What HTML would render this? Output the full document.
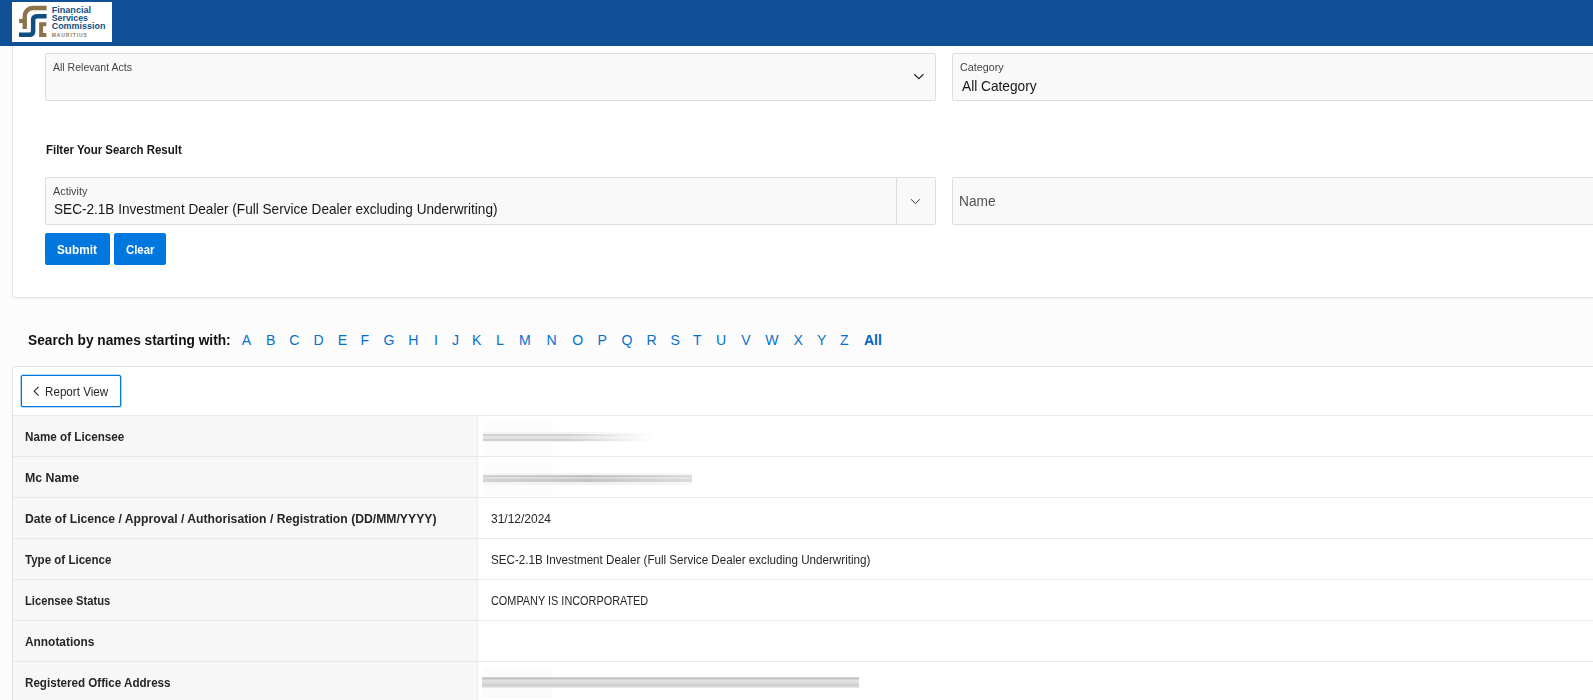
<!DOCTYPE html>
<html><head><meta charset="utf-8">
<style>
*{box-sizing:border-box;margin:0;padding:0}
html,body{width:1593px;height:700px;overflow:hidden;background:#fcfcfc;font-family:"Liberation Sans",sans-serif;color:#262626}
.a{position:absolute}
.t{position:absolute;white-space:nowrap}
.fld{position:absolute;background:#f9f9f9;border:1px solid #dedede;border-radius:2px}
.btn{position:absolute;background:#0076df;border-radius:2px}
.row{position:absolute;left:13px;width:1590px;height:41px;border-top:1px solid #e9e9e9;background:#fff}
.th{position:absolute;left:0;top:0;width:465px;height:40px;background:#f7f7f7;border-right:1px solid #ededed}
</style></head><body>
<div class="a" style="left:0;top:0;width:1593px;height:46px;background:#0f5096;z-index:2"></div>
<svg class="a" style="left:12px;top:2px;z-index:3" width="100" height="40" viewBox="0 0 100 40">
<rect x="0" y="0" width="100" height="40" fill="#fff"/>
<path d="M34.6 3.7 H20.6 A10 10 0 0 0 10.6 13.7 V26.9 H14.9 V14.3 A6 6 0 0 1 20.9 8.3 H34.6 Z" fill="#8c7349"/>
<rect x="7.1" y="16.9" width="6" height="4.2" fill="#8c7349"/>
<path d="M34.6 12 H24.4 A5.5 5.5 0 0 0 18.9 17.5 V29.1 A1.5 1.5 0 0 1 17.4 30.6 H7 V35.1 H17.9 A5.5 5.5 0 0 0 23.4 29.6 V18.1 A1.5 1.5 0 0 1 24.9 16.6 H34.6 Z" fill="#0f4e7f"/>
<path d="M27.1 20.3 H34.3 V24.3 H31.1 V30.9 H34.3 V35.1 H27.1 Z" fill="#8c7349"/>
<g font-family="Liberation Sans" font-weight="bold" fill="#0f4e7f" font-size="9">
<text x="39.7" y="10.6" textLength="39.4" lengthAdjust="spacingAndGlyphs">Financial</text>
<text x="39.7" y="18.9" textLength="36.3" lengthAdjust="spacingAndGlyphs">Services</text>
<text x="39.7" y="27.4" textLength="53.7" lengthAdjust="spacingAndGlyphs">Commission</text>
</g>
<text x="39.7" y="35.1" font-family="Liberation Sans" font-weight="bold" fill="#8f7a58" font-size="5" textLength="35.2" lengthAdjust="spacing">MAURITIUS</text>
</svg>
<div class="a" style="left:12px;top:40px;width:1590px;height:258px;background:#fff;border:1px solid #e4e4e4;border-radius:3px;box-shadow:0 1px 2px rgba(0,0,0,.04)"></div>
<div class="fld" style="left:45px;top:53px;width:891px;height:48px"></div>
<svg class="a" style="left:910px;top:70px" width="18" height="14"><path d="M4.25 4.25 L8.9 8.6 L13.4 4.25" fill="none" stroke="#262626" stroke-width="1.3"/></svg>
<div class="fld" style="left:952px;top:53px;width:700px;height:48px"></div>
<div class="fld" style="left:45px;top:177px;width:891px;height:48px"></div>
<div class="a" style="left:896px;top:178px;width:1px;height:46px;background:#dedede"></div>
<svg class="a" style="left:905px;top:194px" width="20" height="14"><path d="M6 5.25 L10.4 9.6 L14.75 5.25" fill="none" stroke="#2a2a2a" stroke-width="0.95"/></svg>
<div class="fld" style="left:952px;top:177px;width:700px;height:48px"></div>
<div class="btn" style="left:45px;top:233px;width:65px;height:32px"></div>
<div class="btn" style="left:114px;top:233px;width:52px;height:32px"></div>
<div class="a" style="left:12px;top:366px;width:1590px;height:340px;background:#fff;border:1px solid #e4e4e4;border-radius:3px"></div>
<div class="a" style="left:21px;top:375px;width:100px;height:32px;border:1px solid #0076df;border-radius:2px;box-shadow:0 0 0 0.6px rgba(0,118,223,0.55);background:#fff"></div>
<svg class="a" style="left:30px;top:383px" width="12" height="16"><path d="M8.5 3.8 L4.2 8.2 L8.5 12.6" fill="none" stroke="#262626" stroke-width="1.1"/></svg>
<div class="row" style="top:415px"><div class="th"></div></div>
<div class="row" style="top:456px"><div class="th"></div></div>
<div class="row" style="top:497px"><div class="th"></div></div>
<div class="row" style="top:538px"><div class="th"></div></div>
<div class="row" style="top:579px"><div class="th"></div></div>
<div class="row" style="top:620px"><div class="th"></div></div>
<div class="row" style="top:661px"><div class="th"></div></div>
<div class="a" style="left:483px;top:422px;width:70px;height:33px;background:#fcfcfc"></div>
<div class="a" style="left:483px;top:432px;width:170px;height:10px;background:linear-gradient(180deg,#f3f3f3 0,#f3f3f3 2px,#d2d2d2 2px,#d2d2d2 4px,#e2e2e2 4px,#e2e2e2 7px,#d0d0d0 7px,#d0d0d0 9px,#f5f5f5 9px);-webkit-mask-image:linear-gradient(90deg,#000 0%,#000 50%,rgba(0,0,0,.5) 75%,transparent 100%)"></div>
<div class="a" style="left:483px;top:463px;width:70px;height:33px;background:#fcfcfc"></div>
<div class="a" style="left:483px;top:473px;width:209px;height:12px;background:linear-gradient(180deg,#f4f4f4 0,#f4f4f4 2px,#c8c8c8 2px,#bdbdbd 4px,#d6d6d6 4px,#d6d6d6 6px,#c4c4c4 6px,#c4c4c4 9px,#f2f2f2 9px);-webkit-mask-image:linear-gradient(90deg,rgba(0,0,0,.75) 0%,#000 50%,rgba(0,0,0,.6) 100%)"></div>
<div class="a" style="left:482px;top:668px;width:70px;height:30px;background:#fbfbfb"></div>
<div class="a" style="left:482px;top:677px;width:377px;height:11px;background:linear-gradient(180deg,#ececec 0,#b9b9b9 1px,#c6c6c6 2px,#e3e3e3 3px,#dcdcdc 6px,#cfcfcf 8px,#c9c9c9 9px,#e8e8e8 10px)"></div>
<div class="t" style="left:53.20px;top:61.69px;font-size:11.0px;line-height:11.0px;color:#454545;font-weight:normal;letter-spacing:0.000px;transform:scaleX(0.9564);transform-origin:0 0;">All Relevant Acts</div>
<div class="t" style="left:959.60px;top:61.89px;font-size:11.0px;line-height:11.0px;color:#454545;font-weight:normal;letter-spacing:0.000px;transform:scaleX(0.9771);transform-origin:0 0;">Category</div>
<div class="t" style="left:961.60px;top:78.76px;font-size:14.1px;line-height:14.1px;color:#161616;font-weight:normal;letter-spacing:0.000px;transform:scaleX(0.9715);transform-origin:0 0;">All Category</div>
<div class="t" style="left:45.50px;top:143.64px;font-size:12.0px;line-height:12.0px;color:#161616;font-weight:bold;letter-spacing:0.000px;transform:scaleX(0.9538);transform-origin:0 0;">Filter Your Search Result</div>
<div class="t" style="left:53.40px;top:186.39px;font-size:11.0px;line-height:11.0px;color:#454545;font-weight:normal;letter-spacing:0.000px;transform:scaleX(0.9876);transform-origin:0 0;">Activity</div>
<div class="t" style="left:54.30px;top:202.36px;font-size:14.1px;line-height:14.1px;color:#161616;font-weight:normal;letter-spacing:0.000px;transform:scaleX(0.9645);transform-origin:0 0;">SEC-2.1B Investment Dealer (Full Service Dealer excluding Underwriting)</div>
<div class="t" style="left:959.43px;top:193.86px;font-size:14.1px;line-height:14.1px;color:#505050;font-weight:normal;letter-spacing:0.000px;transform:scaleX(0.9740);transform-origin:0 0;">Name</div>
<div class="t" style="left:57.10px;top:243.20px;font-size:13.0px;line-height:13.0px;color:#ffffff;font-weight:bold;letter-spacing:0.000px;transform:scaleX(0.9056);transform-origin:0 0;">Submit</div>
<div class="t" style="left:125.80px;top:243.20px;font-size:13.0px;line-height:13.0px;color:#ffffff;font-weight:bold;letter-spacing:0.000px;transform:scaleX(0.8749);transform-origin:0 0;">Clear</div>
<div class="t" style="left:27.80px;top:332.86px;font-size:14.1px;line-height:14.1px;color:#111111;font-weight:bold;letter-spacing:0.000px;transform:scaleX(0.9729);transform-origin:0 0;">Search by names starting with:</div>
<div class="t" style="left:44.77px;top:385.72px;font-size:12.5px;line-height:12.5px;color:#262626;font-weight:normal;letter-spacing:0.000px;transform:scaleX(0.9317);transform-origin:0 0;">Report View</div>
<div class="t" style="left:24.90px;top:431.42px;font-size:12.5px;line-height:12.5px;color:#262626;font-weight:bold;letter-spacing:0.000px;transform:scaleX(0.9338);transform-origin:0 0;">Name of Licensee</div>
<div class="t" style="left:24.90px;top:472.42px;font-size:12.5px;line-height:12.5px;color:#262626;font-weight:bold;letter-spacing:0.000px;transform:scaleX(0.9849);transform-origin:0 0;">Mc Name</div>
<div class="t" style="left:24.90px;top:513.42px;font-size:12.5px;line-height:12.5px;color:#262626;font-weight:bold;letter-spacing:0.000px;transform:scaleX(0.9749);transform-origin:0 0;">Date of Licence / Approval / Authorisation / Registration (DD/MM/YYYY)</div>
<div class="t" style="left:24.90px;top:554.42px;font-size:12.5px;line-height:12.5px;color:#262626;font-weight:bold;letter-spacing:0.000px;transform:scaleX(0.9242);transform-origin:0 0;">Type of Licence</div>
<div class="t" style="left:24.90px;top:595.42px;font-size:12.5px;line-height:12.5px;color:#262626;font-weight:bold;letter-spacing:0.000px;transform:scaleX(0.8968);transform-origin:0 0;">Licensee Status</div>
<div class="t" style="left:24.90px;top:636.42px;font-size:12.5px;line-height:12.5px;color:#262626;font-weight:bold;letter-spacing:0.000px;transform:scaleX(0.9513);transform-origin:0 0;">Annotations</div>
<div class="t" style="left:24.90px;top:677.42px;font-size:12.5px;line-height:12.5px;color:#262626;font-weight:bold;letter-spacing:0.000px;transform:scaleX(0.9297);transform-origin:0 0;">Registered Office Address</div>
<div class="t" style="left:490.60px;top:513.42px;font-size:12.5px;line-height:12.5px;color:#262626;font-weight:normal;letter-spacing:0.000px;transform:scaleX(0.9583);transform-origin:0 0;">31/12/2024</div>
<div class="t" style="left:490.60px;top:554.42px;font-size:12.5px;line-height:12.5px;color:#262626;font-weight:normal;letter-spacing:0.000px;transform:scaleX(0.9302);transform-origin:0 0;">SEC-2.1B Investment Dealer (Full Service Dealer excluding Underwriting)</div>
<div class="t" style="left:490.60px;top:595.42px;font-size:12.5px;line-height:12.5px;color:#262626;font-weight:normal;letter-spacing:0.000px;transform:scaleX(0.8707);transform-origin:0 0;">COMPANY IS INCORPORATED</div>
<div class="t" style="left:241.80px;top:333.26px;font-size:14.1px;line-height:14.1px;color:#0572ce;font-weight:normal;letter-spacing:0.000px;">A</div>
<div class="t" style="left:265.90px;top:333.26px;font-size:14.1px;line-height:14.1px;color:#0572ce;font-weight:normal;letter-spacing:0.000px;">B</div>
<div class="t" style="left:289.30px;top:333.26px;font-size:14.1px;line-height:14.1px;color:#0572ce;font-weight:normal;letter-spacing:0.000px;">C</div>
<div class="t" style="left:313.50px;top:333.26px;font-size:14.1px;line-height:14.1px;color:#0572ce;font-weight:normal;letter-spacing:0.000px;">D</div>
<div class="t" style="left:337.70px;top:333.26px;font-size:14.1px;line-height:14.1px;color:#0572ce;font-weight:normal;letter-spacing:0.000px;">E</div>
<div class="t" style="left:360.40px;top:333.26px;font-size:14.1px;line-height:14.1px;color:#0572ce;font-weight:normal;letter-spacing:0.000px;">F</div>
<div class="t" style="left:383.50px;top:333.26px;font-size:14.1px;line-height:14.1px;color:#0572ce;font-weight:normal;letter-spacing:0.000px;">G</div>
<div class="t" style="left:408.30px;top:333.26px;font-size:14.1px;line-height:14.1px;color:#0572ce;font-weight:normal;letter-spacing:0.000px;">H</div>
<div class="t" style="left:434.00px;top:333.26px;font-size:14.1px;line-height:14.1px;color:#0572ce;font-weight:normal;letter-spacing:0.000px;">I</div>
<div class="t" style="left:452.00px;top:333.26px;font-size:14.1px;line-height:14.1px;color:#0572ce;font-weight:normal;letter-spacing:0.000px;">J</div>
<div class="t" style="left:472.10px;top:333.26px;font-size:14.1px;line-height:14.1px;color:#0572ce;font-weight:normal;letter-spacing:0.000px;">K</div>
<div class="t" style="left:496.10px;top:333.26px;font-size:14.1px;line-height:14.1px;color:#0572ce;font-weight:normal;letter-spacing:0.000px;">L</div>
<div class="t" style="left:518.90px;top:333.26px;font-size:14.1px;line-height:14.1px;color:#0572ce;font-weight:normal;letter-spacing:0.000px;">M</div>
<div class="t" style="left:546.50px;top:333.26px;font-size:14.1px;line-height:14.1px;color:#0572ce;font-weight:normal;letter-spacing:0.000px;">N</div>
<div class="t" style="left:572.20px;top:333.26px;font-size:14.1px;line-height:14.1px;color:#0572ce;font-weight:normal;letter-spacing:0.000px;">O</div>
<div class="t" style="left:597.50px;top:333.26px;font-size:14.1px;line-height:14.1px;color:#0572ce;font-weight:normal;letter-spacing:0.000px;">P</div>
<div class="t" style="left:621.40px;top:333.26px;font-size:14.1px;line-height:14.1px;color:#0572ce;font-weight:normal;letter-spacing:0.000px;">Q</div>
<div class="t" style="left:646.40px;top:333.26px;font-size:14.1px;line-height:14.1px;color:#0572ce;font-weight:normal;letter-spacing:0.000px;">R</div>
<div class="t" style="left:670.50px;top:333.26px;font-size:14.1px;line-height:14.1px;color:#0572ce;font-weight:normal;letter-spacing:0.000px;">S</div>
<div class="t" style="left:693.00px;top:333.26px;font-size:14.1px;line-height:14.1px;color:#0572ce;font-weight:normal;letter-spacing:0.000px;">T</div>
<div class="t" style="left:715.90px;top:333.26px;font-size:14.1px;line-height:14.1px;color:#0572ce;font-weight:normal;letter-spacing:0.000px;">U</div>
<div class="t" style="left:741.30px;top:333.26px;font-size:14.1px;line-height:14.1px;color:#0572ce;font-weight:normal;letter-spacing:0.000px;">V</div>
<div class="t" style="left:765.30px;top:333.26px;font-size:14.1px;line-height:14.1px;color:#0572ce;font-weight:normal;letter-spacing:0.000px;">W</div>
<div class="t" style="left:793.50px;top:333.26px;font-size:14.1px;line-height:14.1px;color:#0572ce;font-weight:normal;letter-spacing:0.000px;">X</div>
<div class="t" style="left:817.00px;top:333.26px;font-size:14.1px;line-height:14.1px;color:#0572ce;font-weight:normal;letter-spacing:0.000px;">Y</div>
<div class="t" style="left:840.10px;top:333.26px;font-size:14.1px;line-height:14.1px;color:#0572ce;font-weight:normal;letter-spacing:0.000px;">Z</div>
<div class="t" style="left:863.95px;top:333.26px;font-size:14.1px;line-height:14.1px;color:#0a64c8;font-weight:bold;letter-spacing:0.000px;">All</div>

</body></html>
